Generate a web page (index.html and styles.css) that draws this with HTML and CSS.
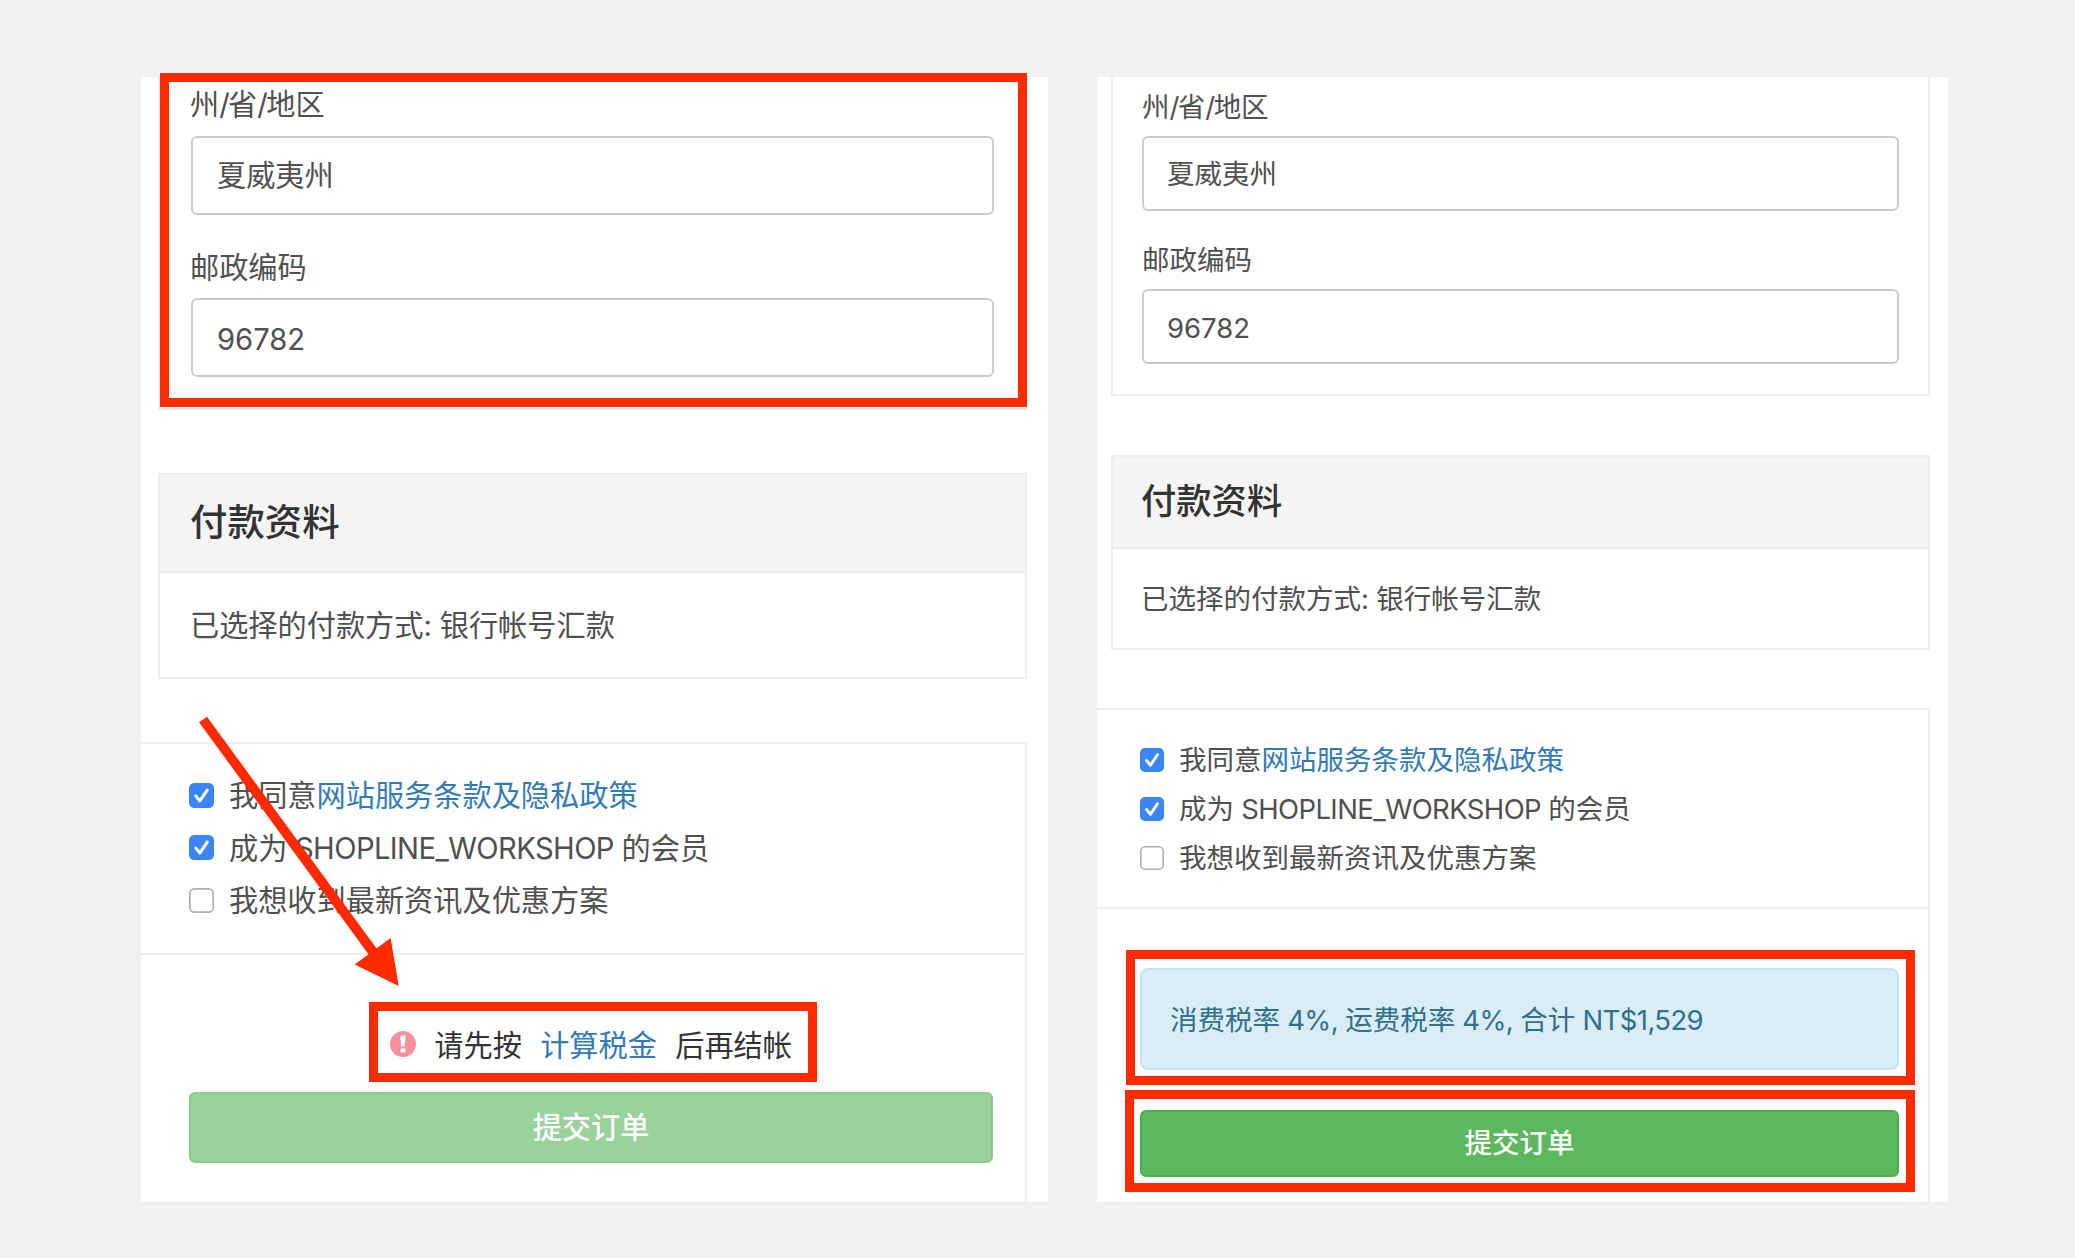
FILE: index.html
```html
<!DOCTYPE html>
<html lang="zh-CN">
<head>
<meta charset="utf-8">
<title>结帐</title>
<link rel="stylesheet" href="styles.css">
</head>
<body>
<main class="stage">
  <section class="panel panel-before">
    <div class="address">
      <label class="label label-first">州<span class="slash">/</span>省<span class="slash">/</span>地区</label>
      <div class="field">夏威夷州</div>
      <label class="label">邮政编码</label>
      <div class="field"><span class="digits">96782</span></div>
    </div>
    <div class="card">
      <h2 class="card-title">付款资料</h2>
      <div class="card-body">已选择的付款方式<span class="latin">: </span>银行帐号汇款</div>
    </div>
    <div class="confirm">
      <ul class="terms">
        <li class="term"><svg class="check" viewBox="0 0 24 24"><rect width="24" height="24" rx="5" fill="#3b86f7"/><path d="M6.5 12.5 10.5 17.2 17.5 6.8" fill="none" stroke="#fff" stroke-width="2.9" stroke-linecap="round" stroke-linejoin="round"/></svg><span class="term-text">我同意<a class="link">网站服务条款及隐私政策</a></span></li>
        <li class="term"><svg class="check" viewBox="0 0 24 24"><rect width="24" height="24" rx="5" fill="#3b86f7"/><path d="M6.5 12.5 10.5 17.2 17.5 6.8" fill="none" stroke="#fff" stroke-width="2.9" stroke-linecap="round" stroke-linejoin="round"/></svg><span class="term-text">成为<span class="latin"> SHOPLINE_WORKSHOP </span>的会员</span></li>
        <li class="term"><svg class="check" viewBox="0 0 24 24"><rect x=".8" y=".8" width="22.4" height="22.4" rx="4.5" fill="#fff" stroke="#b0b0b0" stroke-width="1.6"/></svg><span class="term-text">我想收到最新资讯及优惠方案</span></li>
      </ul>
      <div class="actions">
        <p class="prompt"><svg class="warn" viewBox="0 0 26 26"><circle cx="13" cy="13" r="13" fill="#f5919e"/><path d="M10.3 4.6h5.2l-.7 10.8h-3.8zM10.5 17.6h4.8v4h-4.8z" fill="#fff"/></svg><span>请先按</span><a class="link">计算税金</a><span>后再结帐</span></p>
        <div class="submit">提交订单</div>
      </div>
    </div>
    <div class="mark mark-address"></div>
    <div class="mark mark-prompt"></div>
    <svg class="arrow" viewBox="0 0 210 280"><path d="M9 13.2 17 7.8 187 240 179 246z M208.700 277 164.600 255.500 200.600 229z" fill="#ff2a00"/></svg>
  </section>

  <section class="panel panel-after">
    <div class="address">
      <label class="label label-first">州<span class="slash">/</span>省<span class="slash">/</span>地区</label>
      <div class="field">夏威夷州</div>
      <label class="label">邮政编码</label>
      <div class="field"><span class="digits">96782</span></div>
    </div>
    <div class="card">
      <h2 class="card-title">付款资料</h2>
      <div class="card-body">已选择的付款方式<span class="latin">: </span>银行帐号汇款</div>
    </div>
    <div class="confirm">
      <ul class="terms">
        <li class="term"><svg class="check" viewBox="0 0 24 24"><rect width="24" height="24" rx="5" fill="#3b86f7"/><path d="M6.5 12.5 10.5 17.2 17.5 6.8" fill="none" stroke="#fff" stroke-width="2.9" stroke-linecap="round" stroke-linejoin="round"/></svg><span class="term-text">我同意<a class="link">网站服务条款及隐私政策</a></span></li>
        <li class="term"><svg class="check" viewBox="0 0 24 24"><rect width="24" height="24" rx="5" fill="#3b86f7"/><path d="M6.5 12.5 10.5 17.2 17.5 6.8" fill="none" stroke="#fff" stroke-width="2.9" stroke-linecap="round" stroke-linejoin="round"/></svg><span class="term-text">成为<span class="latin"> SHOPLINE_WORKSHOP </span>的会员</span></li>
        <li class="term"><svg class="check" viewBox="0 0 24 24"><rect x=".8" y=".8" width="22.4" height="22.4" rx="4.5" fill="#fff" stroke="#b0b0b0" stroke-width="1.6"/></svg><span class="term-text">我想收到最新资讯及优惠方案</span></li>
      </ul>
      <div class="actions">
        <div class="notice"><span>消费税率<span class="latin"> 4%, </span>运费税率<span class="latin"> 4%, </span>合计<span class="latin"> NT$1,529</span></span></div>
        <div class="submit">提交订单</div>
      </div>
    </div>
    <div class="mark mark-notice"></div>
    <div class="mark mark-submit"></div>
  </section>
</main>
</body>
</html>
```
FILE: styles.css
```css
* { box-sizing: border-box; }

body {
  margin: 0;
  background: #f1f1f1;
  color: #505050;
  font-family: Inter, "Noto Sans CJK SC", sans-serif;
}

.stage {
  display: flex;
  gap: 49px;
  height: 1258px;
  padding: 77px 0 56px 141px;
}

.panel {
  position: relative;
  display: flex;
  flex-direction: column;
  background: #fff;
  font-size: var(--text);
  white-space: nowrap;
}

.panel-before {
  --text: 29.2px;
  --title: 37.4px;
  --inset: 17px;
  --pad: 30px;
  --label: 54px;
  --field: 79px;
  --row: 52.5px;
  --check: 25px;
  width: 907px;
}

.panel-after {
  --text: 27.5px;
  --title: 35.3px;
  --inset: 14px;
  --pad: 28px;
  --label: 52px;
  --field: 75px;
  --row: 49.2px;
  --check: 24px;
  width: 851px;
}

.address {
  margin-left: var(--inset);
  padding: 0 var(--pad);
  border: 2px solid #eee;
  border-top: 0;
}
.panel-before .address { width: 869px; height: 333px; padding: 0 31px; }
.panel-after .address { width: 819px; height: 319px; padding: 3px 29px 0; }

.label {
  display: block;
  height: var(--label);
  margin-top: 25px;
  margin-bottom: 4px;
  line-height: var(--label);
}
.panel-before .label { text-indent: -1px; line-height: 55px; }
.panel-before .label-first { margin: 0 0 5px; line-height: 56px; }
.panel-after .label { margin: 23px 0 3px; }
.panel-after .label-first { margin: 0 0 4px; line-height: 54px; }

.field {
  display: flex;
  align-items: center;
  height: var(--field);
  padding: 0 0 5px 24px;
  border: 2px solid #ccc;
  border-radius: 6px;
}
.panel-after .field { padding: 0 0 4px 23px; }
.digits { letter-spacing: 0; padding-top: 9px; }
.panel-after .digits { padding-top: 7px; }
.slash { letter-spacing: -1.6px; }
.latin { letter-spacing: -.6px; }
.card-body .latin { letter-spacing: -.2px; }

.card {
  margin-left: var(--inset);
  border: 2px solid #eee;
}
.panel-before .card { width: 869px; height: 206px; margin-top: 63px; }
.panel-after .card { width: 819px; height: 195px; margin-top: 59px; }

.card-title {
  height: 98px;
  margin: 0;
  padding-left: var(--pad);
  border-bottom: 2px solid #eee;
  background: #f5f5f5;
  color: #333;
  font-size: var(--title);
  font-weight: 500;
  line-height: 96px;
}
.card-body { padding-left: var(--pad); line-height: 106px; }
.panel-after .card-title { height: 92px; line-height: 90px; }
.panel-after .card-body { line-height: 100px; }

.confirm {
  flex: 1;
  border-top: 2px solid #eee;
  border-right: 2px solid #eee;
}
.panel-before .confirm { width: 886px; margin-top: 63px; }
.panel-after .confirm { width: 833px; margin-top: 58px; }

.terms {
  height: 211px;
  margin: 0;
  padding: 25px 0 0 48px;
  border-bottom: 2px solid #eee;
  list-style: none;
}
.panel-after .terms { height: 199px; padding: 25px 0 0 43px; }

.term {
  display: flex;
  align-items: center;
  height: var(--row);
}
.term-text { padding-bottom: 4px; }
.check { width: var(--check); height: var(--check); margin-right: 15px; }

.link { color: #337ab7; }

.prompt {
  display: flex;
  align-items: center;
  gap: 18.3px;
  height: 137px;
  margin: 0;
  padding: 40px 0 0 249px;
  color: #333;
}
.prompt > * { margin-bottom: 2px; }
.warn { width: 26px; height: 26px; margin-bottom: 0; }

.submit {
  display: flex;
  align-items: center;
  justify-content: center;
  height: 71px;
  margin-left: 48px;
  width: 804px;
  padding-bottom: 5px;
  border: 2px solid #8fca90;
  border-radius: 6px;
  background: #99d29a;
  color: #fff;
  font-weight: 500;
}
.panel-after .submit {
  height: 67px;
  width: 759px;
  margin: 40px 0 0 43px;
  border-color: #4cae4c;
  background: #5cb85c;
}

.notice {
  display: flex;
  align-items: center;
  width: 759px;
  height: 102px;
  margin: 59px 0 0 43px;
  padding: 0 0 3px 28px;
  border: 2px solid #bce8f1;
  border-radius: 8px;
  background: #d9edf7;
  color: #31708f;
}

/* red call-outs laid over the form */
.mark { position: absolute; border: 9px solid #ff2a00; }
.mark-address { left: 19px; top: -4px; width: 867px; height: 334px; }
.mark-prompt { left: 228px; top: 925px; width: 448px; height: 80px; }
.mark-notice { left: 29px; top: 873px; width: 789px; height: 135px; }
.mark-submit { left: 28px; top: 1013px; width: 790px; height: 102px; }
.arrow { position: absolute; left: 49px; top: 632px; width: 210px; height: 280px; }
```
